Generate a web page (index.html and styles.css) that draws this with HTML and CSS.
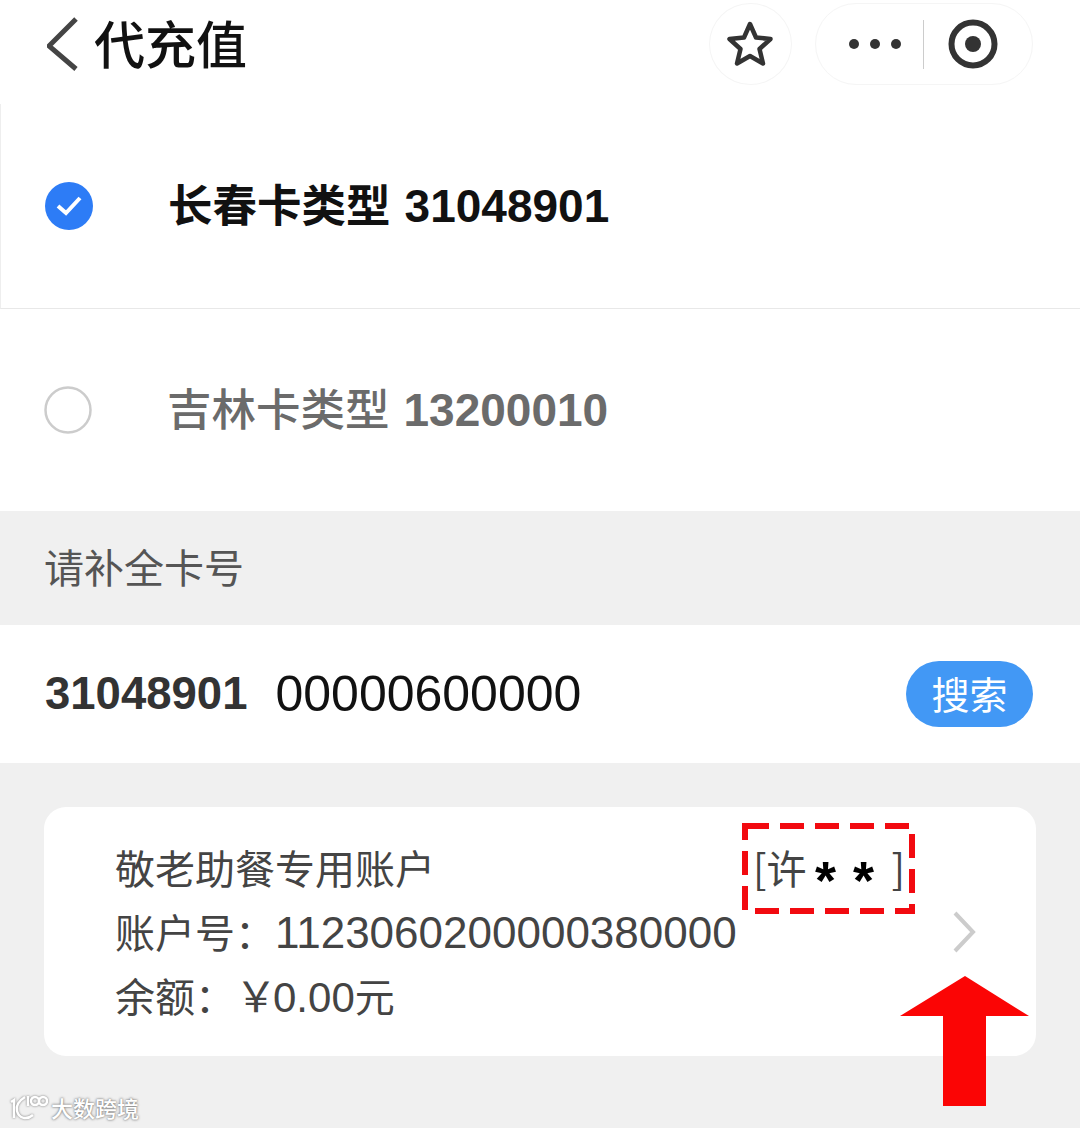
FILE: index.html
```html
<!DOCTYPE html>
<html lang="zh-CN">
<head>
  <meta charset="UTF-8">
  <meta name="viewport" content="width=device-width, initial-scale=1.0">
  <title>代充值</title>
  <link rel="stylesheet" href="styles.css">
</head>
<body>
  <div class="page">
    <div class="nav">
      <svg class="nav-back" viewBox="0 0 36 56" width="36" height="56">
        <path d="M29 3 L2 30 L29 53" fill="none" stroke="#444" stroke-width="5"/>
      </svg>
      <div class="nav-title">代充值</div>
      <div class="nav-star">
        <svg viewBox="0 0 50 48" width="50" height="48">
          <path d="M24 4 L30 17.500 L44.500 19 L33.500 29 L37 43.500 L24 36 L11 43.500 L14.500 29 L3.500 19 L18 17.500 Z" fill="none" stroke="#333" stroke-width="4.500" stroke-linejoin="round"/>
        </svg>
      </div>
      <div class="capsule">
        <div class="capsule-more">
          <span class="dot"></span><span class="dot"></span><span class="dot"></span>
        </div>
        <div class="capsule-line"></div>
        <svg class="capsule-target" viewBox="0 0 50 50" width="50" height="50">
          <circle cx="25" cy="25" r="21.500" fill="none" stroke="#333" stroke-width="6"/>
          <circle cx="25" cy="25" r="8" fill="#333"/>
        </svg>
      </div>
    </div>

    <div class="type-row type-row-on">
      <svg class="radio" viewBox="0 0 48 48" width="48" height="48">
        <circle cx="24" cy="24" r="24" fill="#2d7cf6"/>
        <path d="M13 24 L21 31 L35 16" fill="none" stroke="#fff" stroke-width="4"/>
      </svg>
      <div class="type-name type-name-on">长春卡类型 <span class="num">31048901</span></div>
    </div>
    <div class="type-row">
      <svg class="radio" viewBox="0 0 48 48" width="48" height="48">
        <circle cx="24" cy="24" r="22.500" fill="none" stroke="#ccc" stroke-width="2.500"/>
      </svg>
      <div class="type-name">吉林卡类型 <span class="num">13200010</span></div>
    </div>

    <div class="section-label">请补全卡号</div>

    <div class="card-input">
      <span class="card-prefix">31048901</span>
      <span class="card-number">00000600000</span>
      <button class="btn-search">搜索</button>
    </div>

    <div class="account">
      <div class="account-info">
        <div class="account-line">敬老助餐专用账户<span class="owner">[许<b class="star">*</b><b class="star">*</b><span class="owner-end">]</span></span></div>
        <div class="account-line">账户号：<span class="digits">1123060200000380000</span></div>
        <div class="account-line">余额：<span class="money"><span class="yuan">￥</span>0.00</span>元</div>
      </div>
      <svg class="account-arrow" viewBox="0 0 24 42" width="24" height="42">
        <path d="M3 2 L21 21 L3 40" fill="none" stroke="#ccc" stroke-width="4"/>
      </svg>
    </div>

    <svg class="mark-box" viewBox="0 0 178 95" width="178" height="95">
      <rect x="5" y="5" width="167" height="85" fill="none" stroke="#f20a10" stroke-width="6" stroke-dasharray="24 11"/>
    </svg>
    <svg class="mark-arrow" viewBox="0 0 130 131" width="130" height="131">
      <path d="M65 1 L129 41 L86 41 L86 131 L43 131 L43 41 L0 41 Z" fill="#fb0505"/>
    </svg>

    <div class="watermark">
      <svg viewBox="0 0 40 28" width="40" height="28">
        <g fill="none" stroke="#fff" stroke-width="2.500">
          <path d="M3 9 L6 7 L6 25"/>
          <path d="M17 4 C9 9 8 14 9 18 C11 26 19 27 25 22"/>
          <path d="M20 3 L20 13"/>
          <circle cx="27" cy="8" r="4"/>
          <circle cx="35" cy="8" r="4"/>
        </g>
      </svg>
      <span>大数跨境</span>
    </div>
  </div>
</body>
</html>
```

FILE: styles.css
```css
* {
  box-sizing: border-box;
}
body {
  margin: 0;
  background-color: #f0f0f0;
  font-family: "Noto Sans CJK SC", "Liberation Sans", sans-serif;
  color: #333;
}
.page {
  position: relative;
  width: 1080px;
  height: 1128px;
  overflow: hidden;
}
.nav {
  display: flex;
  align-items: center;
  height: 104px;
  padding: 0 47px 16px 45px;
  background-color: #fff;
}
.nav-back {
  margin: 0 13px 0 2px;
}
.nav-title {
  flex: 1;
  margin: 0 0 4px -2px;
  font-size: 51px;
  font-weight: 500;
  line-height: 60px;
  color: #111;
}
.nav-star {
  display: flex;
  align-items: center;
  justify-content: center;
  width: 83px;
  height: 82px;
  margin-right: 23px;
  border: 1px solid #f5f5f5;
  border-radius: 50%;
}
.capsule {
  display: flex;
  align-items: center;
  width: 218px;
  height: 82px;
  padding-left: 33px;
  border: 1px solid #f5f5f5;
  border-radius: 41px;
}
.capsule-more {
  display: flex;
  gap: 11px;
}
.dot {
  width: 10px;
  height: 10px;
  border-radius: 50%;
  background-color: #333;
}
.capsule-line {
  width: 1px;
  height: 49px;
  margin: 0 24px 0 22px;
  background-color: #ccc;
}
.type-row {
  display: flex;
  align-items: center;
  height: 202px;
  padding-left: 44px;
  background-color: #fff;
}
.type-row-on {
  height: 205px;
  border-left: 1px solid #eee;
  border-bottom: 1px solid #e8e8e8;
  padding-left: 44px;
}
.radio {
  margin-right: 75px;
}
.type-name {
  padding-bottom: 7px;
  font-size: 44.500px;
  font-weight: 500;
  color: #6b6b6b;
  white-space: nowrap;
}
.type-name-on {
  font-weight: 700;
  color: #111;
}
.num {
  margin-left: 4px;
  font-family: "Liberation Sans", sans-serif;
  font-size: 46px;
  font-weight: 700;
}
.section-label {
  display: flex;
  align-items: center;
  height: 114px;
  padding: 0 0 5px 44px;
  font-size: 40px;
  color: #555;
}
.card-input {
  display: flex;
  align-items: center;
  height: 138px;
  padding: 0 47px 0 45px;
  background-color: #fff;
}
.card-prefix {
  margin-right: 28px;
  font-family: "Liberation Sans", sans-serif;
  font-size: 45.500px;
  font-weight: 700;
}
.card-number {
  flex: 1;
  font-family: "Liberation Sans", sans-serif;
  font-size: 50px;
  color: #111;
}
.btn-search {
  width: 127px;
  height: 66px;
  padding: 0 0 3px;
  border: none;
  border-radius: 33px;
  background-color: #4298f5;
  color: #fff;
  font-family: inherit;
  font-size: 38px;
}
.account {
  display: flex;
  align-items: center;
  justify-content: space-between;
  width: 992px;
  height: 249px;
  margin: 44px 0 0 44px;
  padding: 0 60px 0 71px;
  border-radius: 22px;
  background-color: #fff;
}
.account-info {
  padding-bottom: 2px;
}
.account-line {
  height: 64px;
  font-size: 40px;
  line-height: 64px;
  color: #444;
  white-space: nowrap;
}
.owner {
  margin-left: 318px;
}
.star {
  display: inline-block;
  width: 38px;
  line-height: 0;
  text-align: center;
  vertical-align: -15px;
  font-family: "Liberation Sans", sans-serif;
  font-size: 54px;
  font-weight: 700;
  color: #000;
}
.owner-end {
  margin-left: 9px;
}
.digits {
  font-family: "Liberation Sans", "Noto Sans CJK SC", sans-serif;
  font-size: 44px;
}
.money {
  font-family: "Liberation Sans", "Noto Sans CJK SC", sans-serif;
  font-size: 42px;
}
.yuan {
  margin-right: -4px;
}
.mark-box {
  position: absolute;
  left: 740px;
  top: 821px;
}
.mark-arrow {
  position: absolute;
  left: 900px;
  top: 975px;
}
.watermark {
  position: absolute;
  left: 8px;
  top: 1091px;
  display: flex;
  align-items: center;
  gap: 3px;
  font-size: 22px;
  font-weight: 500;
  color: #fff;
  text-shadow: 0 0 2px #777, 0 0 3px #999;
}
.watermark svg {
  filter: drop-shadow(0 0 1px #777);
}
```
